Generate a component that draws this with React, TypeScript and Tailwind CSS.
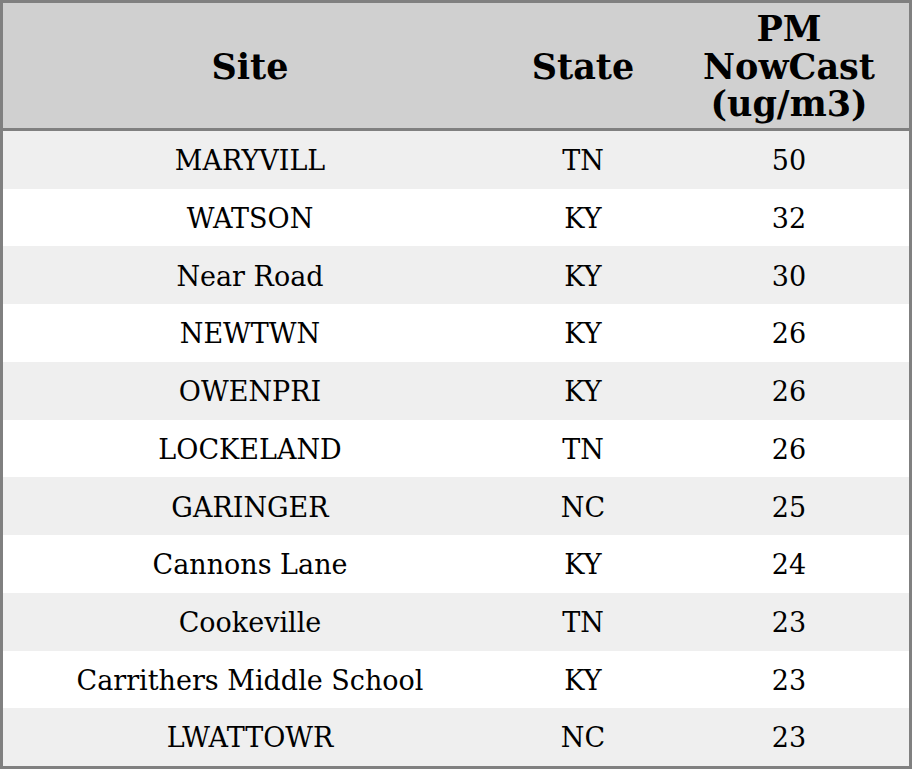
import React from 'react';

const rows: [string, string, number][] = [
  ['MARYVILL', 'TN', 50],
  ['WATSON', 'KY', 32],
  ['Near Road', 'KY', 30],
  ['NEWTWN', 'KY', 26],
  ['OWENPRI', 'KY', 26],
  ['LOCKELAND', 'TN', 26],
  ['GARINGER', 'NC', 25],
  ['Cannons Lane', 'KY', 24],
  ['Cookeville', 'TN', 23],
  ['Carrithers Middle School', 'KY', 23],
  ['LWATTOWR', 'NC', 23],
];

export default function App() {
  return (
    <div className="w-[912px] h-[769px] border-[3px] border-[#808080] bg-white flex flex-col font-['DejaVu_Serif',serif] text-black">
      <div className="grid grid-cols-[494px_172px_1fr] h-[128px] shrink-0 pt-[2px] bg-[#d0d0d0] border-b-[3px] border-[#808080] text-[35px] font-bold leading-[37.5px] text-center items-center">
        <div>Site</div>
        <div>State</div>
        <div>
          PM
          <br />
          NowCast
          <br />
          (ug/m3)
        </div>
      </div>
      <div className="flex-1 flex flex-col">
        {rows.map(([site, state, pm], i) => (
          <div
            key={i}
            className={`flex-1 grid grid-cols-[494px_172px_1fr] items-center pt-[3px] text-center text-[27px] ${
              i % 2 === 0 ? 'bg-[#efefef]' : 'bg-white'
            }`}
          >
            <div>{site}</div>
            <div>{state}</div>
            <div>{pm}</div>
          </div>
        ))}
      </div>
    </div>
  );
}
